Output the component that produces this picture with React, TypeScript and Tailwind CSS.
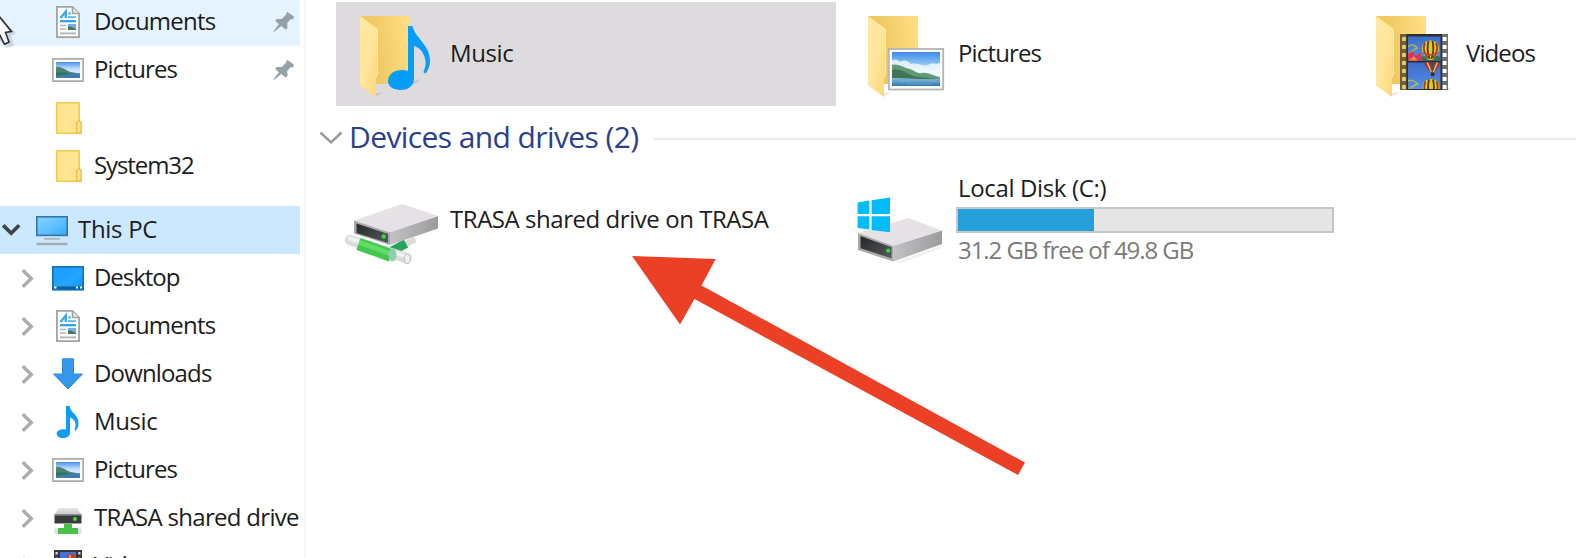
import type { ReactNode } from 'react';

/* ---------- small sidebar icons (32x32) ---------- */

function Small({ children }: { children: ReactNode }) {
  return (
    <svg className="h-8 w-8 shrink-0" viewBox="0 0 32 32" fill="none">
      {children}
    </svg>
  );
}

function DocumentIcon() {
  return (
    <Small>
      <path d="M4.9 .9H20.5L27.1 7.5V31.1H4.9Z" fill="#fdfdfd" stroke="#a3a3a3" strokeWidth="1.8" />
      <path d="M20.5 1V7.5H27" fill="#e6e6e6" stroke="#a3a3a3" strokeWidth="1.6" />
      <path d="M8.5 12L13.8 5.5V12" stroke="#3fa9ea" strokeWidth="2.4" />
      <path d="M16 7.5H19M16 11.2H24" stroke="#5bb5ec" strokeWidth="1.8" />
      <path d="M8 15.2H24" stroke="#2b9fe6" strokeWidth="2.2" />
      <path d="M8 19.5H14M8 23H14M8 27.3H24" stroke="#b5b5b5" strokeWidth="1.7" />
      <rect x="16" y="18" width="8" height="6" fill="#6fb0df" />
      <path d="M16 20.5L19 20.5L24 23V24H16Z" fill="#3c7d55" />
    </Small>
  );
}

function PictureIcon() {
  return (
    <Small>
      <defs>
        <linearGradient id="smallSky" x1="0" y1="0" x2="0" y2="1">
          <stop offset="0" stopColor="#4a8fee" />
          <stop offset="0.4" stopColor="#b5dafa" />
          <stop offset="0.6" stopColor="#d3ecfa" />
        </linearGradient>
      </defs>
      <rect x="0.9" y="4.9" width="30.2" height="22.2" fill="#fff" stroke="#aeaeae" strokeWidth="1.8" />
      <rect x="4" y="8" width="24" height="16" fill="url(#smallSky)" />
      <path d="M4 13C8 12 12 15 16 17C20 18.5 23 18.5 28 19.5V21H4Z" fill="#4b8377" />
      <path d="M4 20C10 18.5 20 20 28 19.5V24H4Z" fill="#3d7fb5" />
      <path d="M4 18.5C9 17.5 15 19 20 19.5L4 22Z" fill="#35705a" />
    </Small>
  );
}

function FolderSmallIcon() {
  return (
    <Small>
      <path d="M4.8 .8H27.2V19L29.2 21V31.2H4.8Z" fill="#ffe58f" stroke="#f2cb52" strokeWidth="1.6" />
      <path d="M24.6 31V20.5L27 18.5L29.2 20.5V31Z" fill="#ffe188" stroke="#edc44a" strokeWidth="1.5" />
    </Small>
  );
}

function ThisPcIcon() {
  return (
    <Small>
      <defs>
        <linearGradient id="screen" x1="0" y1="0" x2="1" y2="1">
          <stop offset="0" stopColor="#8bd2ff" />
          <stop offset="0.5" stopColor="#62c1ff" />
          <stop offset="1" stopColor="#35a9f7" />
        </linearGradient>
      </defs>
      <rect x="0.8" y="2.8" width="30.4" height="18.6" fill="url(#screen)" stroke="#35759f" strokeWidth="1.6" />
      <path d="M8 24.8H24" stroke="#a9b6bf" strokeWidth="1.8" />
      <path d="M1.5 28.6H30.5L32 31.2H0Z" fill="#a2aeb7" />
      <path d="M2 28H30" stroke="#dbe3e8" strokeWidth="1" />
    </Small>
  );
}

function DesktopIcon() {
  return (
    <Small>
      <defs>
        <linearGradient id="desk" x1="0" y1="0" x2="1" y2="1">
          <stop offset="0" stopColor="#189cff" />
          <stop offset="0.6" stopColor="#25a4ff" />
          <stop offset="1" stopColor="#0c90f4" />
        </linearGradient>
      </defs>
      <rect x="0.8" y="4.8" width="30.4" height="23" fill="url(#desk)" stroke="#1272bb" strokeWidth="1.6" />
      <path d="M1 25.8H31" stroke="#0c5d9d" strokeWidth="2.6" />
      <path d="M2 25.5H4.5M24 25.5H26M28 25.5H30" stroke="#fff" strokeWidth="1.8" />
    </Small>
  );
}

function DownloadIcon() {
  return (
    <Small>
      <path d="M10.5 .8H21.5V16H30.5L16 31L1.5 16H10.5Z" fill="#3597ec" stroke="#3387d2" strokeWidth="1" />
    </Small>
  );
}

function MusicSmallIcon() {
  return (
    <Small>
      <path
        d="M14 0H17.5C18.5 6.5 26.5 9 26.5 17C26.5 20.5 25.5 23 23.5 24.8L22.5 24C25 18 23 12.8 18 11.5V27C18 30 14.5 32 11 32C7.2 32 4.7 30.3 4.7 27.7C4.7 25 8 23.3 11.5 23.3C12.5 23.3 13.2 23.4 14 23.7Z"
        fill="#0b9df7"
      />
    </Small>
  );
}

function SharedDriveSmallIcon() {
  return (
    <Small>
      <defs>
        <linearGradient id="netTop" x1="0" y1="0" x2="0" y2="1">
          <stop offset="0" stopColor="#e6e6e6" />
          <stop offset="1" stopColor="#c6c6c6" />
        </linearGradient>
      </defs>
      <path d="M6.5 6H25L29.5 13H2.5Z" fill="url(#netTop)" />
      <rect x="2.5" y="12.5" width="27" height="9" fill="#393c3c" />
      <path d="M3 12.8H29" stroke="#8f9292" strokeWidth="1.4" />
      <circle cx="23" cy="17" r="1.9" fill="#41e346" />
      <path d="M12 22H20V26H26V32H6V26H12Z" fill="#48c146" />
      <path d="M2.5 26.5H6V31.5H2.5ZM26 26.5H29.5V31.5H26Z" fill="#dcdcdc" />
    </Small>
  );
}

function VideoSmallIcon() {
  return (
    <Small>
      <rect x="2" y="0" width="28" height="32" fill="#383838" />
      <rect x="8" y="2" width="16" height="13" fill="#3f73dc" />
      <path d="M4.6 2V32M27.4 2V32" stroke="#dedede" strokeWidth="2.2" strokeDasharray="2.6 3" />
      <circle cx="19" cy="7.5" r="4" fill="#b44040" />
      <path d="M18 5V11" stroke="#e4c43c" strokeWidth="1.5" />
    </Small>
  );
}

function PinIcon() {
  return (
    <svg className="h-[22px] w-[22px] shrink-0" viewBox="0 0 22 22">
      <path
        d="M14 .8L21 5.4L20 8.5L17.5 8.3L14.2 12L14.6 17L12.6 18.5L8.3 15L1 21L.6 20.3L5.8 13.2L2.2 9.8L3.6 8L8.8 8L13 3.7Z"
        fill="#95a1a6"
      />
    </svg>
  );
}

/* ---------- large tile icons ---------- */

function Large({ children }: { children: ReactNode }) {
  return (
    <svg className="h-[104px] w-[113px] shrink-0" viewBox="0 0 113 104" fill="none">
      <defs>
        <linearGradient id="folderBack" x1="0" y1="0.6" x2="1" y2="0.4">
          <stop offset="0.3" stopColor="#efc862" />
          <stop offset="1" stopColor="#ffdd83" />
        </linearGradient>
        <linearGradient id="folderFlap" x1="0" y1="0" x2="1" y2="1">
          <stop offset="0" stopColor="#ffe89f" />
          <stop offset="0.5" stopColor="#ffe69d" />
          <stop offset="1" stopColor="#fbd672" />
        </linearGradient>
        <linearGradient id="casing" x1="0" y1="0" x2="1" y2="0">
          <stop offset="0" stopColor="#c2c1c3" />
          <stop offset="1" stopColor="#9c9b9d" />
        </linearGradient>
        <linearGradient id="panel" x1="0" y1="0" x2="1" y2="1">
          <stop offset="0" stopColor="#262829" />
          <stop offset="1" stopColor="#54595a" />
        </linearGradient>
      </defs>
      {children}
    </svg>
  );
}

function Folder() {
  return (
    <>
      <path d="M40 91L48 90L40 94.5Z" fill="#000" opacity="0.08" />
      <path d="M24 14H74V82H40Z" fill="url(#folderBack)" />
      <path d="M24 14L41.8 27V71L40 76V95L24 83.5Z" fill="url(#folderFlap)" />
      <path d="M41.5 28V71L40 76" stroke="#fff0b4" strokeWidth="0.8" />
    </>
  );
}

function MusicFolderIcon() {
  return (
    <Large>
      <Folder />
      <path d="M77 83L85 77L78 79Z" fill="#000" opacity="0.1" />
      <path
        d="M72 24H76.5C79 36 94 43 94 58.5C94 63.5 92.5 68 89.5 71.5L87.3 70.3C90 64.5 90.5 59 88 53.5C86 48.5 82.5 45.3 78 43.8V77C78 83.5 72.5 88 65 88C57 88 52 84.2 52 79C52 72.5 58 68 66 68C68.3 68 70.2 68.3 72 69Z"
        fill="#059df8"
      />
    </Large>
  );
}

function PictureFolderIcon() {
  return (
    <Large>
      <defs>
        <linearGradient id="sky" x1="0" y1="0" x2="0" y2="1">
          <stop offset="0" stopColor="#3f8cea" />
          <stop offset="0.35" stopColor="#8cc3f6" />
          <stop offset="0.55" stopColor="#e7f5fd" />
        </linearGradient>
        <linearGradient id="lake" x1="0" y1="0" x2="0" y2="1">
          <stop offset="0" stopColor="#87b6d3" />
          <stop offset="0.5" stopColor="#5c9cc8" />
          <stop offset="1" stopColor="#2d76b0" />
        </linearGradient>
      </defs>
      <Folder />
      <rect x="44.8" y="47" width="54.4" height="40.5" fill="#fff" stroke="#b3b4b5" strokeWidth="1.8" />
      <rect x="48" y="50" width="48" height="34" fill="url(#sky)" />
      <path d="M48 59C51 57 53 57 56 60C60 57 64 59 67 62C73 60 79 65 84 63C88 60 92 63 96 61V74H48Z" fill="#eff8fe" opacity="0.85" />
      <path d="M48 63C54 61 60 66 66 67C70 68 73 72 78 71C84 70 89 74 96 75V78H48Z" fill="#629a75" />
      <path d="M48 68C55 66 61 70 67 73C73 76 83 75 96 77V79H48Z" fill="#3e7655" />
      <path d="M48 76C60 75.5 78 78 96 76.5V84H48Z" fill="url(#lake)" />
      <path d="M55 79H92M62 82H88" stroke="#93c1dc" strokeWidth="0.8" opacity="0.5" />
    </Large>
  );
}

function Balloon({ x, y }: { x: number; y: number }) {
  return (
    <g transform={`translate(${x} ${y})`}>
      <path d="M-8.5 0C-8.5 -5 -5 -8.5 0 -8.5C5 -8.5 8.5 -5 8.5 0C8.5 4.5 4 9 2 11H-2C-4 9 -8.5 4.5 -8.5 0Z" fill="#e6c81c" />
      <path d="M-5.5 -6C-7.5 -2 -6.5 4 -2.8 9M5.5 -6C7.5 -2 6.5 4 2.8 9" stroke="#a23a2c" strokeWidth="1.8" />
      <path d="M-2 -8C-3.5 -2 -3 4 -1 10M2 -8C3.5 -2 3 4 1 10" stroke="#4d3c1c" strokeWidth="1.8" />
      <path d="M-7.5 4L0 6L7.5 4" stroke="#c54528" strokeWidth="1.6" />
    </g>
  );
}

function VideoFolderIcon() {
  return (
    <Large>
      <defs>
        <linearGradient id="film" x1="0" y1="0" x2="0" y2="1">
          <stop offset="0" stopColor="#3b6cc8" />
          <stop offset="1" stopColor="#5590ea" />
        </linearGradient>
        <clipPath id="frameA">
          <rect x="56" y="34.5" width="32.5" height="24" />
        </clipPath>
        <clipPath id="frameB">
          <rect x="56" y="60.5" width="32.5" height="26.5" />
        </clipPath>
      </defs>
      <Folder />
      <path d="M95 89L100 86.5L96 86Z" fill="#000" opacity="0.1" />
      <rect x="48" y="32" width="48" height="56" fill="#2e2d2b" />
      <path d="M48 32H54.5V88H48Z" fill="#6d5f3a" />
      <path d="M90 32H96V88H90Z" fill="#6c6c6c" />
      <path d="M52 35V88" stroke="#f0cd70" strokeWidth="3.6" strokeDasharray="4 4" />
      <path d="M92.6 35V88" stroke="#fff" strokeWidth="3.8" strokeDasharray="4 4" />
      <g clipPath="url(#frameA)">
        <rect x="56" y="34" width="33" height="25" fill="url(#film)" />
        <path d="M56 45C60 41 64 44 66 47M57 51L65 46" stroke="#9fb254" strokeWidth="1.6" />
        <path d="M56 59V52L60 49L64 54L68 50L72 59Z" fill="#de3658" />
        <path d="M56 59L62 54L66 59Z" fill="#ef8d4d" />
        <path d="M70 59V55L78 52L89 55V59Z" fill="#2a7654" />
        <Balloon x={78.5} y={47} />
      </g>
      <g clipPath="url(#frameB)">
        <rect x="56" y="60" width="33" height="28" fill="url(#film)" />
        <path d="M72 60H88C87 66 82.5 69 81.5 72H79.5C78 69 73 65 72 60Z" fill="#a82b3a" />
        <path d="M75 60L79.4 70M85.5 60L81.4 70" stroke="#e6c12c" strokeWidth="1.6" />
        <path d="M80.3 60V69" stroke="#28538e" strokeWidth="2" />
        <path d="M79 71H82.5V74H79Z" fill="#41281e" />
        <path d="M56 79C60 77 64 80 66 83M57 87L66 81" stroke="#a9bb54" strokeWidth="1.6" />
        <Balloon x={79} y={85.5} />
      </g>
    </Large>
  );
}

function SharedDriveIcon() {
  return (
    <Large>
      <path d="M60 81L77 72.5" stroke="#dcdcdc" strokeWidth="6" strokeLinecap="round" />
      <path d="M54 84L70 75.5" stroke="#27a35d" strokeWidth="9" />
      <path d="M14 72L70.5 90" stroke="#dcdcdc" strokeWidth="10.5" strokeLinecap="round" />
      <path d="M14 70.5L70.5 88.5" stroke="#f1f1f1" strokeWidth="4" strokeLinecap="round" />
      <path d="M22.5 76L55 87.5" stroke="#44c751" strokeWidth="12.5" />
      <path d="M23.5 74.5L54 85.5" stroke="#65dc68" strokeWidth="5" />
      <ellipse cx="56.5" cy="87" rx="4" ry="6.4" fill="#8fcfad" />
      <ellipse cx="71.3" cy="90.8" rx="3.2" ry="4.8" fill="#efefef" stroke="#c2c2c2" strokeWidth="1.2" />
      <path d="M54 64L102 48V60.5L54 77Z" fill="url(#casing)" />
      <path d="M18 52.5L66.5 36L102 48L54 64.5Z" fill="#e5e1e5" />
      <path d="M18 52.5L54 64.5V77L18 65.5Z" fill="#aaa9ab" />
      <path d="M20.5 55.5L52 66V75L20.5 65Z" fill="url(#panel)" />
      <circle cx="47.7" cy="68.5" r="2.2" fill="#31dc38" />
    </Large>
  );
}

function LocalDiskIcon() {
  return (
    <Large>
      <path d="M50 94.5L98.5 77L96 81L58 95Z" fill="#000" opacity="0.05" />
      <path d="M49.5 77.5L98 62.5V76L49.5 93.5Z" fill="url(#casing)" />
      <path d="M14 65L64.5 50L98 62.5L49.5 78Z" fill="#e5e1e5" />
      <path d="M14 65L49.5 78V93.5L14 82Z" fill="#aaa9ab" />
      <path d="M16.5 68L47.5 79.3V90.3L16.5 80.3Z" fill="url(#panel)" />
      <circle cx="44.2" cy="82.7" r="2.1" fill="#31dc38" />
      <path
        d="M13.6 34.6L25.3 32.6V46H13.6ZM27.6 32.2L46 29.6V46H27.6ZM13.6 48.3H25.3V61.6L13.6 60ZM27.6 48.3H46V64.3L27.6 61.9Z"
        fill="#00bcfa"
      />
    </Large>
  );
}

/* ---------- sidebar ---------- */

type RowProps = { icon: ReactNode; label: string; tracking: string; arrow?: boolean; pinned?: boolean; highlight?: string };

function Row({ icon, label, tracking, arrow, pinned, highlight = '' }: RowProps) {
  return (
    <div className={`flex h-12 w-[300px] shrink-0 items-center overflow-hidden whitespace-nowrap ${highlight}`}>
      <div className="w-[52px] shrink-0 pl-[21px]">
        {arrow && (
          <svg className="h-5 w-[14px]" viewBox="0 0 14 20" fill="none">
            <path d="M1.8 2.3L10.2 10.5L1.8 18.7" stroke="#acacac" strokeWidth="3.4" />
          </svg>
        )}
      </div>
      {icon}
      <span className={`-mt-0.5 ml-2.5 ${tracking}`}>{label}</span>
      {pinned && (
        <div className="ml-auto pr-[5px]">
          <PinIcon />
        </div>
      )}
    </div>
  );
}

function Sidebar() {
  return (
    <nav className="-mt-0.5 flex h-[560px] w-[306px] shrink-0 flex-col overflow-hidden border-r-2 border-[#f7f7f7]">
      <Row icon={<DocumentIcon />} label="Documents" tracking="tracking-[-0.8px]" pinned highlight="bg-[#e5f3ff]" />
      <Row icon={<PictureIcon />} label="Pictures" tracking="tracking-[-0.85px]" pinned />
      <Row icon={<FolderSmallIcon />} label="" tracking="" />
      <Row icon={<FolderSmallIcon />} label="System32" tracking="tracking-[-1.1px]" />
      <div className="mt-4 flex h-12 w-[300px] shrink-0 items-center bg-[#cce8ff]">
        <svg className="ml-0.5 h-5 w-[34px] shrink-0" viewBox="0 0 34 20" fill="none">
          <path d="M1.2 5.3L9.2 13.3L17.2 5.3" stroke="#3d4348" strokeWidth="3.6" />
        </svg>
        <ThisPcIcon />
        <span className="-mt-0.5 ml-2.5 tracking-[-0.3px]">This PC</span>
      </div>
      <Row icon={<DesktopIcon />} label="Desktop" tracking="tracking-[-1.05px]" arrow />
      <Row icon={<DocumentIcon />} label="Documents" tracking="tracking-[-0.8px]" arrow />
      <Row icon={<DownloadIcon />} label="Downloads" tracking="tracking-[-0.85px]" arrow />
      <Row icon={<MusicSmallIcon />} label="Music" tracking="tracking-[-0.4px]" arrow />
      <Row icon={<PictureIcon />} label="Pictures" tracking="tracking-[-0.85px]" arrow />
      <Row icon={<SharedDriveSmallIcon />} label="TRASA shared drive" tracking="tracking-[-0.7px]" arrow />
      <Row icon={<VideoSmallIcon />} label="Videos" tracking="tracking-[-0.7px]" arrow />
    </nav>
  );
}

/* ---------- main pane ---------- */

function Tile({ icon, children, highlight = '' }: { icon: ReactNode; children: ReactNode; highlight?: string }) {
  return (
    <div className={`flex h-[104px] w-[500px] shrink-0 items-center whitespace-nowrap ${highlight}`}>
      {icon}
      {children}
    </div>
  );
}

export default function App() {
  return (
    <div className="relative flex h-[558px] w-full overflow-hidden bg-white font-['Open_Sans',sans-serif] text-[24px] leading-8 text-[#1c1c1c]">
      <Sidebar />
      <main className="flex min-w-0 flex-1 flex-col overflow-hidden pt-0.5">
        <div className="flex gap-2 pl-[30px]">
          <Tile icon={<MusicFolderIcon />} highlight="bg-[#dddbde]">
            <span className="-mt-0.5 ml-px tracking-[-0.4px]">Music</span>
          </Tile>
          <Tile icon={<PictureFolderIcon />}>
            <span className="-mt-0.5 ml-px tracking-[-0.85px]">Pictures</span>
          </Tile>
          <Tile icon={<VideoFolderIcon />}>
            <span className="-mt-0.5 ml-px tracking-[-0.9px]">Videos</span>
          </Tile>
        </div>
        <div className="flex h-[62px] items-center pl-[13px]">
          <svg className="h-4 w-6 shrink-0" viewBox="0 0 24 16" fill="none">
            <path d="M1.5 3.5L12 13.3L22.5 3.5" stroke="#999" strokeWidth="2.4" />
          </svg>
          <h2 className="ml-1.5 w-[305px] shrink-0 whitespace-nowrap text-[30px] leading-10 tracking-[-0.6px] text-[#2a408f]">Devices and drives (2)</h2>
          <div className="mt-1 h-0.5 flex-1 bg-[#e9e9e9]" />
        </div>
        <div className="flex gap-2 pl-[30px]">
          <Tile icon={<SharedDriveIcon />}>
            <span className="-mt-0.5 ml-px tracking-[-0.45px]">TRASA shared drive on TRASA</span>
          </Tile>
          <Tile icon={<LocalDiskIcon />}>
            <div className="-mt-[3px] flex flex-col">
              <span className="ml-px tracking-[-0.35px]">Local Disk (C:)</span>
              <div className="-ml-px mt-[3px] mb-px h-[26px] w-[378px] border-2 border-[#c6c6c6] bg-[#e6e6e6]">
                <div className="h-full w-[136px] bg-[#26a0da]" />
              </div>
              <span className="ml-px tracking-[-1.05px] text-[#7a7a7a]">31.2 GB free of 49.8 GB</span>
            </div>
          </Tile>
        </div>
      </main>

      {/* annotation arrow over the content */}
      <svg className="pointer-events-none absolute top-[250px] left-[626px] h-[230px] w-[404px]" viewBox="626 250 404 230">
        <path d="M632 256L715.7 259L701.5 285.5L1025 462.5L1018 475L694.5 299L680 324.5Z" fill="#eb4026" />
      </svg>

      {/* mouse pointer */}
      <svg className="pointer-events-none absolute top-0 left-0 h-[52px] w-5" viewBox="0 0 20 52">
        <path d="M0 18L16 33L11 36L14 46L7 48L0 41Z" fill="#000" opacity="0.12" />
        <path d="M-6 10L11.5 31.5L5.5 32.5L9 42L4.5 44.2L0 35.5L-6 40Z" fill="#fff" stroke="#2c2c38" strokeWidth="1.6" />
      </svg>
    </div>
  );
}
